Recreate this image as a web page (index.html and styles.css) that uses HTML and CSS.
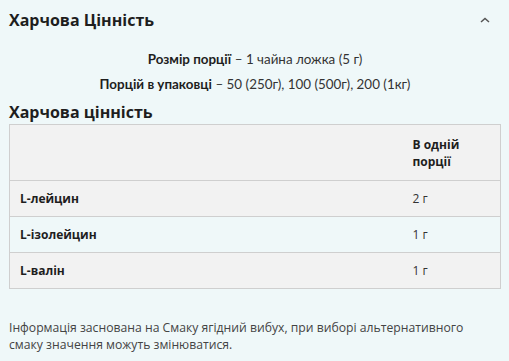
FILE: index.html
```html
<!DOCTYPE html>
<html lang="uk">
<head>
<meta charset="utf-8">
<link rel="stylesheet" href="styles.css">
</head>
<body>
<section class="panel">
  <div class="panel-head">
    <h2 class="panel-title">Харчова Цінність</h2>
    <svg class="chevron" width="10" height="6" viewBox="0 0 10 6"><path d="M1 5 L5 1.5 L9 5" fill="none" stroke="#555" stroke-width="1.5"/></svg>
  </div>
  <p class="serving"><b>Розмір порції</b> – 1 чайна ложка (5 г)</p>
  <p class="serving"><b>Порцій в упаковці</b> – 50 (250г), 100 (500г), 200 (1кг)</p>
  <h3 class="table-title">Харчова цінність</h3>
  <table class="facts">
    <colgroup><col class="c1"><col class="c2"></colgroup>
    <tr class="gray head"><th></th><th>В одній<br>порції</th></tr>
    <tr class="gray"><td class="name">L-лейцин</td><td>2 г</td></tr>
    <tr><td class="name">L-ізолейцин</td><td>1 г</td></tr>
    <tr class="gray"><td class="name">L-валін</td><td>1 г</td></tr>
  </table>
  <p class="note">Інформація заснована на Смаку ягідний вибух, при виборі альтернативного смаку значення можуть змінюватися.</p>
</section>
</body>
</html>
```
FILE: styles.css
```css
html, body { margin: 0; padding: 0; background: #eff8f9; }
body { font-family: "Open Sans", "Noto Sans", sans-serif; color: #222; }
.panel { padding: 8px 9px 0 9px; width: 492px; }
.panel-head { display: flex; align-items: center; justify-content: space-between; height: 24px; }
.panel-title { margin: 0; font-size: 16px; font-weight: 700; color: #1e1e1e; }
.chevron { margin-right: 11px; margin-top: 0; }
.serving { margin: 0; text-align: center; font-family: "Lato", "Open Sans", sans-serif; font-size: 13.4px; color: #333; line-height: 17px; }
.serving:first-of-type { margin-top: 19px; }
.serving + .serving { margin-top: 8px; }
.serving b { color: #1e1e1e; }
.table-title { margin: 8px 0 0 0; font-size: 16px; font-weight: 700; color: #1e1e1e; line-height: 22px; }
.facts { border-collapse: collapse; width: 492px; margin-top: 1px; border: 1px solid #cfcfcf; font-size: 12px; }
.facts .c1 { width: 393px; }
.facts td, .facts th { padding: 9px 10px; text-align: left; line-height: 17px; border-top: 1px solid #cfcfcf; vertical-align: middle; }
.facts th { font-weight: 700; color: #1e1e1e; }
.facts .head th { padding-top: 11px; padding-bottom: 10px; }
.facts td { color: #333; }
.facts td.name { font-weight: 700; color: #1e1e1e; }
.gray { background: #f2f2f2; }
.note { margin: 30px 0 0 0; max-width: 478px; font-size: 12.2px; line-height: 17px; color: #444; }
```
